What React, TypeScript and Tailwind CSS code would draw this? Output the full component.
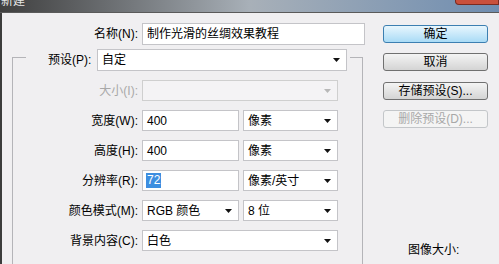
const font = { fontFamily: '"Liberation Sans", "Noto Sans CJK SC", sans-serif' };

const Arrow = ({ disabled = false }: { disabled?: boolean }) => (
  <svg width="7" height="4" viewBox="0 0 7 4" className="shrink-0">
    <path d="M0 0h7L3.5 4z" fill={disabled ? '#b8b8b8' : '#111'} />
  </svg>
);

const Select = ({ value, width, disabled = false }: { value: string; width: string; disabled?: boolean }) => (
  <div
    className={`${width} flex h-[21px] items-center justify-between border pl-[4px] pr-[6px] ${
      disabled ? 'border-[#cfcfcf] bg-[#f4f3f5]' : 'border-[#c4c4c8] bg-white'
    }`}
  >
    <span className="leading-none">{value}</span>
    <Arrow disabled={disabled} />
  </div>
);

const Row = ({ label, disabled = false, children }: { label: string; disabled?: boolean; children: React.ReactNode }) => (
  <div className="flex items-center gap-[4px]">
    <div className={`w-[125px] text-right ${disabled ? 'text-[#a8a8a8]' : 'text-black'}`}>{label}</div>
    {children}
  </div>
);

const Button = ({ label, primary = false, disabled = false }: { label: string; primary?: boolean; disabled?: boolean }) => (
  <div
    className={`flex h-[18px] w-[105px] items-center justify-center rounded-[3px] border leading-none ${
      primary
        ? 'border-[#3c7fb1] bg-gradient-to-b from-[#e8f6fd] to-[#a9dbf6] text-black'
        : disabled
          ? 'border-[#c3c6c9] bg-[#f4f4f4] text-[#a8a8a8]'
          : 'border-[#707070] bg-gradient-to-b from-[#f4f4f4] to-[#d4d4d4] text-black'
    }`}
  >
    {label}
  </div>
);

export default function App() {
  return (
    <div className="flex h-[264px] w-[499px] flex-col overflow-hidden bg-[#f0eff1] text-[12px]" style={font}>
      {/* title bar */}
      <div className="relative flex h-[13px] shrink-0 overflow-hidden border-b border-[#5a5a5a] bg-gradient-to-r from-[#3f3f3f] via-[#a8b0b8] to-[#6f8db0]">
        <span className="-mt-[8px] ml-[1px] text-[12px] text-[#e8e8e8]">新建</span>
        <div className="absolute right-0 top-0 h-[5px] w-[44px] rounded-bl-[4px] border border-t-0 border-[#7a2a20] bg-[#c9503c]" />
      </div>

      <div className="flex flex-1 border-l-2 border-[#3c3c3c]">
        {/* left column */}
        <div className="flex w-[363px] flex-col">
          <div className="mt-[10px] flex items-center gap-[4px]">
            <div className="w-[136px] text-right">名称(N):</div>
            <div className="flex h-[22px] w-[223px] items-center border border-[#c4c4c8] bg-white pl-[4px]">
              制作光滑的丝绸效果教程
            </div>
          </div>

          <div className="ml-[10px] mt-[12px] flex w-[351px] flex-1 flex-col border-x border-t border-[#b4b4b8]">
            <div className="-mt-[9px] ml-[13px] flex w-[324px] items-center gap-[3px] bg-[#f0eff1] pl-[22px]">
              <div className="w-[46px]">预设(P):</div>
              <Select value="自定" width="w-[250px] h-[22px]" />
            </div>

            <div className="mt-[9px] flex flex-col gap-[9px]">
              <Row label="大小(I):" disabled>
                <Select value="" width="w-[196px]" disabled />
              </Row>
              <Row label="宽度(W):">
                <div className="flex h-[21px] w-[97px] items-center border border-[#c4c4c8] bg-white pl-[4px]">400</div>
                <Select value="像素" width="w-[95px]" />
              </Row>
              <Row label="高度(H):">
                <div className="flex h-[21px] w-[97px] items-center border border-[#c4c4c8] bg-white pl-[4px]">400</div>
                <Select value="像素" width="w-[95px]" />
              </Row>
              <Row label="分辨率(R):">
                <div className="flex h-[21px] w-[97px] items-center border border-[#c4c4c8] bg-white pl-[3px]">
                  <span className="bg-[#3d8ee0] px-[1px] leading-[15px] text-white">72</span>
                </div>
                <Select value="像素/英寸" width="w-[95px]" />
              </Row>
              <Row label="颜色模式(M):">
                <Select value="RGB 颜色" width="w-[97px]" />
                <Select value="8 位" width="w-[95px]" />
              </Row>
              <Row label="背景内容(C):">
                <Select value="白色" width="w-[196px]" />
              </Row>
            </div>
          </div>
        </div>

        {/* right column */}
        <div className="ml-[18px] flex flex-col pt-[12px]">
          <Button label="确定" primary />
          <div className="mt-[10px]">
            <Button label="取消" />
          </div>
          <div className="mt-[11px]">
            <Button label="存储预设(S)..." />
          </div>
          <div className="mt-[10px]">
            <Button label="删除预设(D)..." disabled />
          </div>
          <div className="mt-auto mb-[5px] pl-[25px]">图像大小:</div>
        </div>
      </div>
    </div>
  );
}
